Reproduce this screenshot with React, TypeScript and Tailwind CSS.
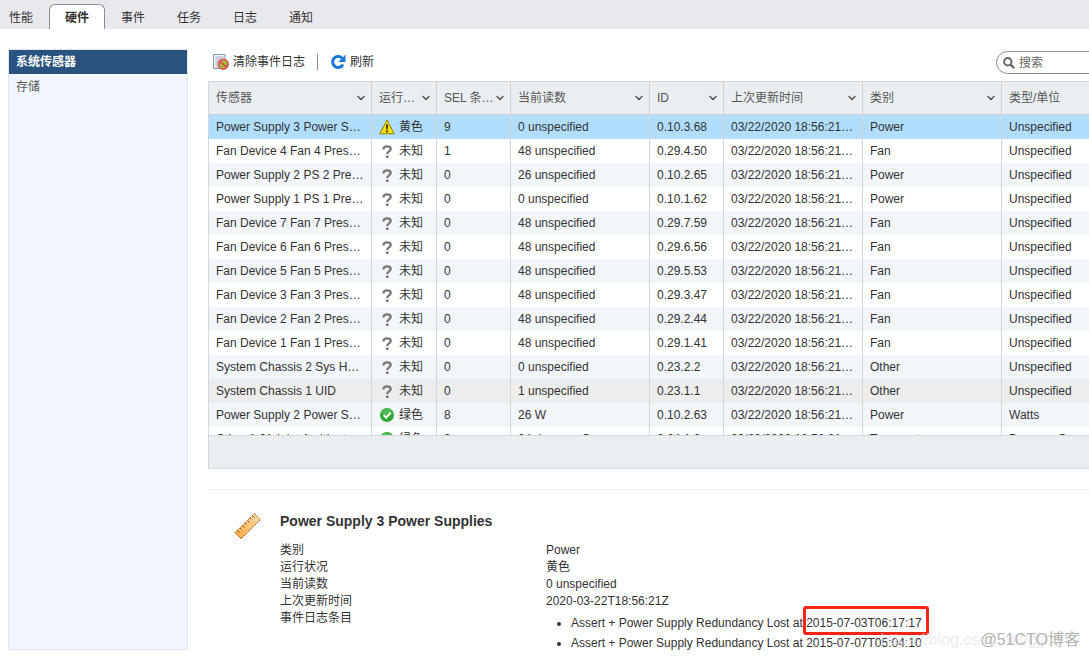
import { useState } from "react";
import { ChevronDown } from "lucide-react";
import clsx from "clsx";

type Status = "warning" | "unknown" | "ok";

interface Sensor {
  name: string;
  status: Status;
  sel: number;
  reading: string;
  id: string;
  category: string;
  unit: string;
}

const tabs = ["性能", "硬件", "事件", "任务", "日志", "通知"];

const columns = [
  { label: "传感器", width: "w-[163px]" },
  { label: "运行…", width: "w-[65px]" },
  { label: "SEL 条…", width: "w-[74px]" },
  { label: "当前读数", width: "w-[139px]" },
  { label: "ID", width: "w-[74px]" },
  { label: "上次更新时间", width: "w-[139px]" },
  { label: "类别", width: "w-[139px]" },
  { label: "类型/单位", width: "w-[139px]" },
];

const statusLabels: Record<Status, string> = {
  warning: "黄色",
  unknown: "未知",
  ok: "绿色",
};

const sensors: Sensor[] = [
  { name: "Power Supply 3 Power S…", status: "warning", sel: 9, reading: "0 unspecified", id: "0.10.3.68", category: "Power", unit: "Unspecified" },
  { name: "Fan Device 4 Fan 4 Pres…", status: "unknown", sel: 1, reading: "48 unspecified", id: "0.29.4.50", category: "Fan", unit: "Unspecified" },
  { name: "Power Supply 2 PS 2 Pre…", status: "unknown", sel: 0, reading: "26 unspecified", id: "0.10.2.65", category: "Power", unit: "Unspecified" },
  { name: "Power Supply 1 PS 1 Pre…", status: "unknown", sel: 0, reading: "0 unspecified", id: "0.10.1.62", category: "Power", unit: "Unspecified" },
  { name: "Fan Device 7 Fan 7 Pres…", status: "unknown", sel: 0, reading: "48 unspecified", id: "0.29.7.59", category: "Fan", unit: "Unspecified" },
  { name: "Fan Device 6 Fan 6 Pres…", status: "unknown", sel: 0, reading: "48 unspecified", id: "0.29.6.56", category: "Fan", unit: "Unspecified" },
  { name: "Fan Device 5 Fan 5 Pres…", status: "unknown", sel: 0, reading: "48 unspecified", id: "0.29.5.53", category: "Fan", unit: "Unspecified" },
  { name: "Fan Device 3 Fan 3 Pres…", status: "unknown", sel: 0, reading: "48 unspecified", id: "0.29.3.47", category: "Fan", unit: "Unspecified" },
  { name: "Fan Device 2 Fan 2 Pres…", status: "unknown", sel: 0, reading: "48 unspecified", id: "0.29.2.44", category: "Fan", unit: "Unspecified" },
  { name: "Fan Device 1 Fan 1 Pres…", status: "unknown", sel: 0, reading: "48 unspecified", id: "0.29.1.41", category: "Fan", unit: "Unspecified" },
  { name: "System Chassis 2 Sys H…", status: "unknown", sel: 0, reading: "0 unspecified", id: "0.23.2.2", category: "Other", unit: "Unspecified" },
  { name: "System Chassis 1 UID", status: "unknown", sel: 0, reading: "1 unspecified", id: "0.23.1.1", category: "Other", unit: "Unspecified" },
  { name: "Power Supply 2 Power S…", status: "ok", sel: 8, reading: "26 W", id: "0.10.2.63", category: "Power", unit: "Watts" },
  { name: "Other 1 01-Inlet Ambient", status: "ok", sel: 0, reading: "24 degrees C", id: "0.64.1.2", category: "Temperature", unit: "Degrees C" },
];

const HOVERED_ID = "0.23.1.1";

function StatusIcon({ status }: { status: Status }) {
  if (status === "warning") {
    return (
      <svg className="h-4 w-4 shrink-0" viewBox="0 0 16 16" aria-hidden="true">
        <path d="M8 1 15.300 14.800H.700Z" fill="#f3e000" stroke="#8b7d1c" strokeLinejoin="round" />
        <path d="M7 5.500h2l-.4 5H7.400Z" fill="#222" />
        <rect x="7.100" y="11.500" width="1.800" height="1.800" fill="#222" />
      </svg>
    );
  }

  if (status === "ok") {
    return (
      <svg className="h-4 w-4 shrink-0" viewBox="0 0 16 16" aria-hidden="true">
        <circle cx="8" cy="8" r="7" fill="#2fa836" />
        <path d="M2 6a6.300 6.300 0 0 1 12 0c-3 2-9 2-12 0Z" fill="#4dbb50" />
        <path d="m4.600 8 2.600 2.600 4.400-4.800" fill="none" stroke="#fff" strokeWidth="2" />
      </svg>
    );
  }

  return (
    <svg className="h-4 w-4 shrink-0" viewBox="0 0 16 16" aria-hidden="true">
      <path
        d="M4.400 6.600C4.400 4.200 5.800 3.300 8 3.300s3.700 1 3.700 2.800c0 2.300-3.500 2.200-3.500 5"
        fill="none"
        stroke="#777"
        strokeWidth="2.300"
      />
      <rect x="7" y="12.500" width="2.500" height="2.500" fill="#777" />
    </svg>
  );
}

function ClearLogIcon() {
  return (
    <svg className="h-4 w-4" viewBox="0 0 16 16" aria-hidden="true">
      <path d="M.5.500h11.500v14H.5Z" fill="#eef3f7" stroke="#8497a6" />
      <path d="M2.500 3h8M2.500 5h8M2.500 7h5M2.500 9h3M2.500 11h3M2.500 13h3" stroke="#a3b3bf" />
      <circle cx="10.300" cy="10.300" r="4.700" fill="#8ed02d" stroke="#dc5656" strokeWidth="2" />
      <path d="m7 7 6.600 6.600" stroke="#dc5656" strokeWidth="2.200" />
    </svg>
  );
}

function RefreshIcon() {
  return (
    <svg className="h-4 w-4" viewBox="0 0 16 16" aria-hidden="true">
      <path d="M12.200 4.200A5.500 5.500 0 1 0 13 10.500" fill="none" stroke="#1878dc" strokeWidth="3" />
      <path d="M15.500.5V8H8l2.500-2.300L13 3.200Z" fill="#1878dc" />
    </svg>
  );
}

function RulerIcon() {
  return (
    <svg className="h-7 w-7 shrink-0" viewBox="0 0 28 28" aria-hidden="true">
      <defs>
        <linearGradient id="ruler" x1="1" y1="0" x2="0" y2="1">
          <stop offset="0" stopColor="#ffd9ae" />
          <stop offset="1" stopColor="#fba83a" />
        </linearGradient>
      </defs>
      <path d="M20.500 1.500 26.500 7.500 7 27 .8 20.800Z" fill="url(#ruler)" stroke="#a9652a" strokeDasharray="2 1" />
      <path
        d="m3.500 18.500 2 2M6 16l1.200 1.200M8.500 13.500l2 2M11 11l1.200 1.200M13.500 8.500l2 2M16 6l1.200 1.200M18.500 3.500l2 2"
        stroke="#7c4a1e"
      />
    </svg>
  );
}

function SensorTable() {
  const [selectedId, setSelectedId] = useState("0.10.3.68");

  return (
    <div className="border border-[#d5d8da]">
      <div className="h-[353px] overflow-hidden">
        <table className="w-full table-fixed border-separate border-spacing-0">
          <thead>
            <tr className="h-[33px] bg-[#ebeef1] text-[#565656]">
              {columns.map((column) => (
                <th
                  key={column.label}
                  className={clsx("border-r border-b border-[#d0d0d0] pr-1 pl-[7px] text-left font-normal", column.width)}
                >
                  <div className="flex items-center justify-between whitespace-nowrap">
                    {column.label}
                    <ChevronDown className="h-3 w-3 shrink-0 text-[#555]" strokeWidth={3} />
                  </div>
                </th>
              ))}
            </tr>
          </thead>
          <tbody>
            {sensors.map((sensor, index) => (
              <tr
                key={sensor.id}
                onClick={() => setSelectedId(sensor.id)}
                className={clsx(
                  "h-6 whitespace-nowrap *:border-r *:border-[#d5d5d5] *:pl-[7px]",
                  sensor.id === selectedId
                    ? "bg-[#b1deff]"
                    : sensor.id === HOVERED_ID
                      ? "bg-[#ededed]"
                      : index % 2 === 0
                        ? "bg-[#f2f6fb]"
                        : "bg-white"
                )}
              >
                <td>{sensor.name}</td>
                <td>
                  <div className="flex h-6 items-center gap-1">
                    <StatusIcon status={sensor.status} />
                    <span className="leading-4">{statusLabels[sensor.status]}</span>
                  </div>
                </td>
                <td>{sensor.sel}</td>
                <td>{sensor.reading}</td>
                <td>{sensor.id}</td>
                <td>03/22/2020 18:56:21…</td>
                <td>{sensor.category}</td>
                <td>{sensor.unit}</td>
              </tr>
            ))}
          </tbody>
        </table>
      </div>
      <div className="h-[33px] border-t border-[#d5d8da] bg-[#ebeef1]" />
    </div>
  );
}

function SensorDetails() {
  return (
    <section className="mt-5 flex gap-[18px] border-t border-[#ececec] pt-[22px] pl-[26px]">
      <RulerIcon />
      <div>
        <h2 className="text-sm leading-[18px] font-bold">Power Supply 3 Power Supplies</h2>
        <dl className="mt-3 grid grid-cols-[266px_auto] leading-[17px]">
          <dt>类别</dt>
          <dd>Power</dd>
          <dt>运行状况</dt>
          <dd>黄色</dd>
          <dt>当前读数</dt>
          <dd>0 unspecified</dd>
          <dt>上次更新时间</dt>
          <dd>2020-03-22T18:56:21Z</dd>
          <dt>事件日志条目</dt>
          <dd>
            <ul className="list-disc pt-[3px] pl-[25px] leading-5">
              <li>
                Assert + Power Supply Redundancy Lost at{" "}
                <span className="relative">
                  2015-07-03T06:17:17
                  <span className="absolute -top-[10px] -right-[7px] -bottom-[5px] -left-[3px] rounded-[3px] border-3 border-[#fb2416]" />
                </span>
              </li>
              <li>Assert + Power Supply Redundancy Lost at 2015-07-07T05:04:10</li>
            </ul>
          </dd>
        </dl>
      </div>
    </section>
  );
}

export default function App() {
  const [activeTab, setActiveTab] = useState("硬件");

  return (
    <div className="relative flex h-screen flex-col overflow-hidden bg-white font-['Liberation_Sans','Noto_Sans_CJK_SC',sans-serif] text-xs text-[#333]">
      <nav className="flex h-[29px] shrink-0 items-end bg-[#e8e8ed]">
        {tabs.map((tab) => (
          <button
            key={tab}
            onClick={() => setActiveTab(tab)}
            className={clsx(
              "h-[25px] px-4 pt-0.5 first:pl-[9px]",
              tab === activeTab && "rounded-t-md border-x border-t border-[#8c8c8c] bg-white px-[15px] font-bold"
            )}
          >
            {tab}
          </button>
        ))}
      </nav>

      <div className="flex min-h-0 flex-1 gap-5 pt-5 pb-2 pl-2">
        <aside className="w-[180px] shrink-0 border border-[#e1e6ee] bg-[#f2f5fb]">
          <a href="#sensors" className="block bg-[#2a547f] px-[7px] leading-6 font-bold text-white">
            系统传感器
          </a>
          <a href="#storage" className="block px-[7px] pt-px leading-6 text-[#555]">
            存储
          </a>
        </aside>

        <main className="min-w-[934px] flex-1">
          <div className="flex h-8 items-start justify-between">
            <div className="flex h-[25px] items-center pl-[5px]">
              <button className="flex items-center gap-1">
                <ClearLogIcon />
                清除事件日志
              </button>
              <div className="mx-3 h-4 w-px bg-[#8a8a8a]" />
              <button className="flex items-center gap-1">
                <RefreshIcon />
                刷新
              </button>
            </div>
            <label className="mt-0.5 flex h-[23px] w-[146px] items-center gap-1 rounded-full border border-[#8c8c8c] pl-1.5">
              <svg className="h-3 w-3 shrink-0" viewBox="0 0 12 12" aria-hidden="true">
                <circle cx="4.800" cy="4.800" r="3.700" fill="none" stroke="#666" strokeWidth="2" />
                <path d="m7.600 7.600 3.600 3.600" stroke="#666" strokeWidth="2.200" />
              </svg>
              <input
                type="text"
                aria-label="搜索"
                placeholder="搜索"
                className="w-full min-w-0 bg-transparent outline-none placeholder:text-[#666]"
              />
            </label>
          </div>
          <SensorTable />
          <SensorDetails />
        </main>
      </div>

      <div className="pointer-events-none absolute right-[27px] bottom-2 text-base leading-5 text-[#e2e2e2]/70">
        https://blog.csdn.net/gjjbb
      </div>
      <div className="pointer-events-none absolute right-[9px] bottom-2 text-base leading-5 text-[#b4b4b4]">
        @51CTO博客
      </div>
    </div>
  );
}
